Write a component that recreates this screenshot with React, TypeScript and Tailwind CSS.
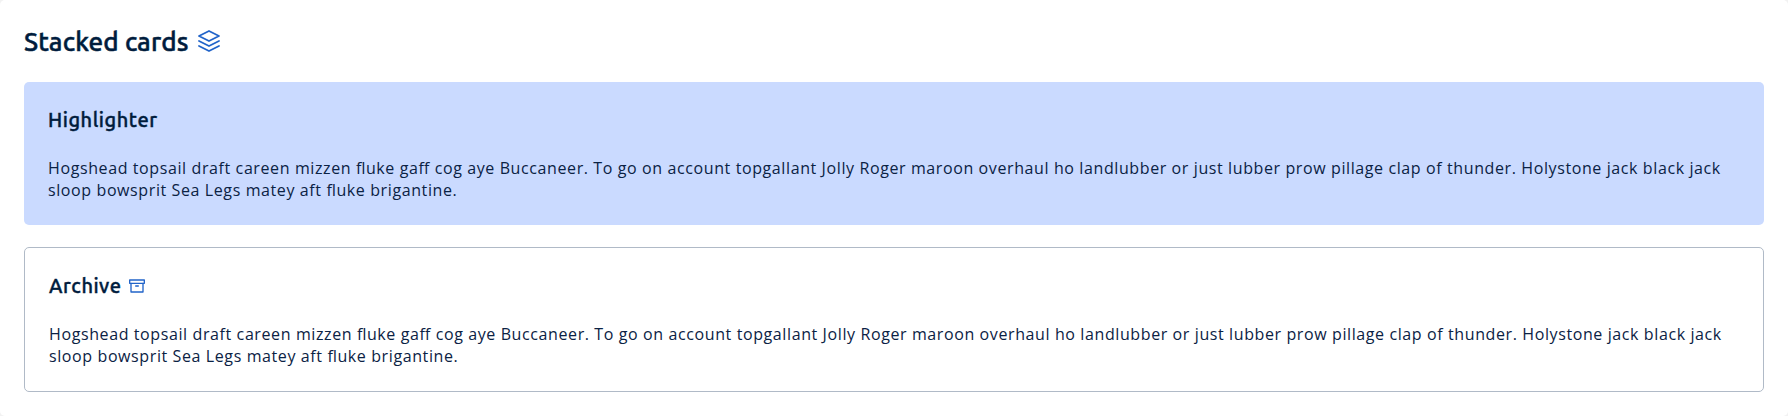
import React from "react";
import { FiArchive, FiLayers } from "react-icons/fi";

const body =
  "Hogshead topsail draft careen mizzen fluke gaff cog aye Buccaneer. To go on account topgallant Jolly Roger maroon overhaul ho landlubber or just lubber prow pillage clap of thunder. Holystone jack black jack sloop bowsprit Sea Legs matey aft fluke brigantine.";

const bodyClass =
  "mt-[23px] font-['Open_Sans',sans-serif] text-base leading-[22px] tracking-[0.605px] [font-feature-settings:'liga'_1] text-[#0b2244]";
const headingClass =
  "flex items-center font-['Ubuntu','Open_Sans',sans-serif] text-xl leading-7 font-medium tracking-[0.55px] text-[#001c3d] [-webkit-text-stroke:0.4px_#001c3d]";

export default function App() {
  return (
    <div className="bg-[#f2f2f2]">
      <main className="h-[416px] rounded-[5px] bg-white p-6">
        <h1 className="flex h-[34px] items-center font-['Ubuntu','Open_Sans',sans-serif] text-[26px] font-medium tracking-[0.13px] text-[#001c3d] [-webkit-text-stroke:0.5px_#001c3d]">
          Stacked cards
          <FiLayers strokeWidth={1.8} className="ml-2 size-6 text-[#2264c9]" />
        </h1>
        <section className="mt-6 h-[143px] rounded-[5px] bg-[#cadaff] p-6">
          <h2 className={headingClass}>Highlighter</h2>
          <p className={bodyClass}>{body}</p>
        </section>
        <section className="mt-[22px] h-[145px] rounded-[5px] border border-[#b0bac7] p-6">
          <h2 className={headingClass}>
            Archive
            <FiArchive className="ml-2 size-4 text-[#2264c9]" />
          </h2>
          <p className={bodyClass}>{body}</p>
        </section>
      </main>
    </div>
  );
}
